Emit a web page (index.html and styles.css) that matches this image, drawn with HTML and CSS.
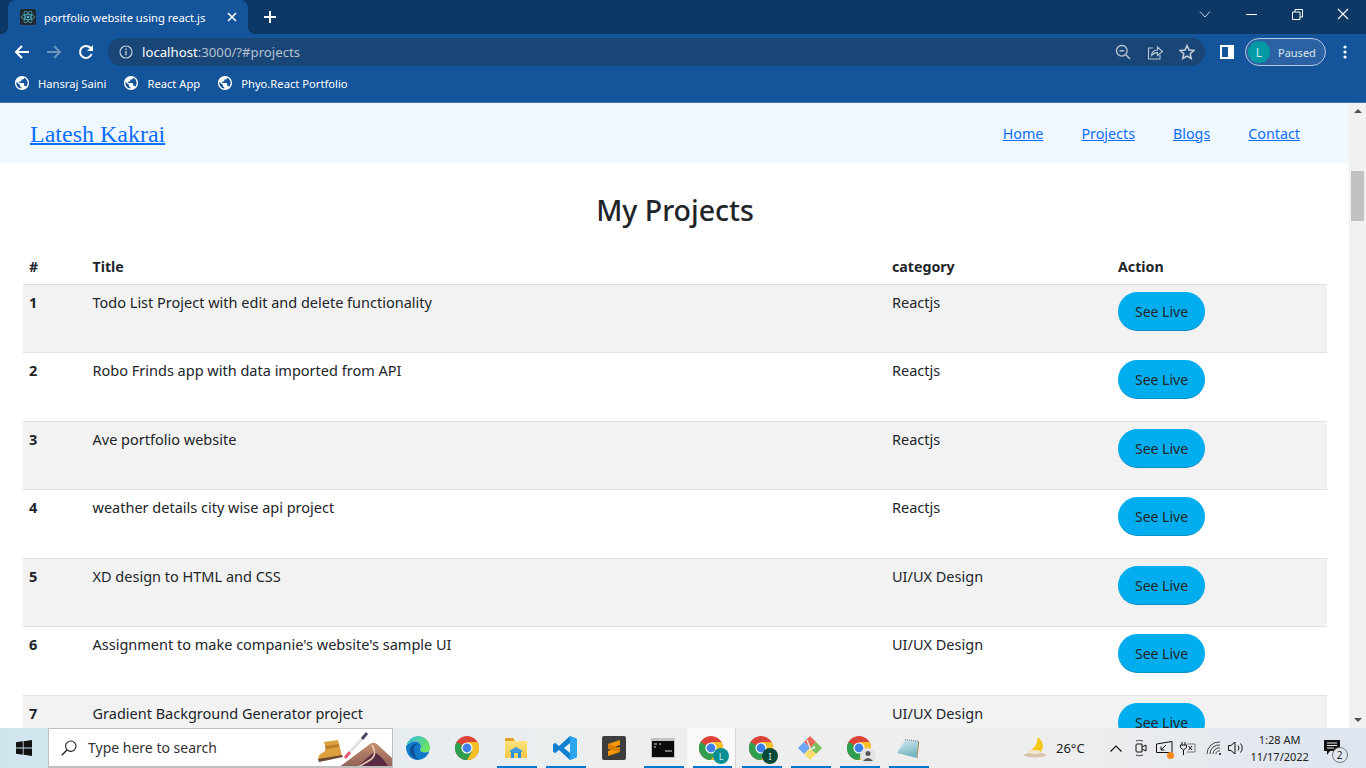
FILE: index.html
```html
<!DOCTYPE html>
<html lang="en">
  <head>
    <meta charset="UTF-8" />
    <meta name="viewport" content="width=device-width, initial-scale=1.0" />
    <title>portfolio website using react.js</title>
    <link rel="stylesheet" href="styles.css">
  </head>
  <body>
    <svg class="defs" width="0" height="0" aria-hidden="true">
      <defs>
        <linearGradient id="edge-top" x1="0" y1="0" x2="1" y2="0.6">
          <stop offset="0" stop-color="#2fb5e8" />
          <stop offset="1" stop-color="#6fe35f" />
        </linearGradient>
        <linearGradient id="folder-body" x1="0" y1="0" x2="0" y2="1">
          <stop offset="0" stop-color="#fde27c" />
          <stop offset="1" stop-color="#f6c647" />
        </linearGradient>
        <linearGradient id="notepad-page" x1="0" y1="0" x2="0.3" y2="1">
          <stop offset="0" stop-color="#d6ecef" />
          <stop offset="1" stop-color="#74b5c4" />
        </linearGradient>
        <linearGradient id="peak" x1="0" y1="0" x2="0" y2="1">
          <stop offset="0" stop-color="#c5906f" />
          <stop offset="1" stop-color="#8e5f57" />
        </linearGradient>
      </defs>
      <symbol id="globe" viewBox="2 2 20 20">
        <path d="M12 2C6.48 2 2 6.48 2 12s4.48 10 10 10 10-4.48 10-10S17.52 2 12 2zm-1 17.93c-3.95-.49-7-3.85-7-7.93 0-.62.08-1.21.21-1.79L9 15v1c0 1.1.9 2 2 2v1.93zm6.9-2.54c-.26-.81-1-1.39-1.9-1.39h-1v-3c0-.55-.45-1-1-1H8v-2h2c.55 0 1-.45 1-1V7h2c1.1 0 2-.9 2-2v-.41c2.93 1.19 5 4.06 5 7.41 0 2.08-.8 3.97-2.1 5.39z" fill="#fff" />
      </symbol>
      <symbol id="chrome" viewBox="0 0 24 24">
        <circle cx="12" cy="12" r="12" fill="#db4437" />
        <path d="M12 12 1.6 6A12 12 0 0 0 12 24l5.2-9z" fill="#2f9e4f" />
        <path d="M12 6h10.4A12 12 0 0 1 12 24l5.2-9z" fill="#f6c026" />
        <circle cx="12" cy="12" r="5.6" fill="#fff" />
        <circle cx="12" cy="12" r="4.4" fill="#3d7fe6" />
      </symbol>
    </svg>

    <header class="browser">
      <div class="tabstrip">
        <div class="tab">
          <svg class="favicon" width="16" height="16" viewBox="0 0 16 16">
            <rect width="16" height="16" rx="2" fill="#20262b" />
            <g fill="none" stroke="#4fb3c8" stroke-width=".8">
              <ellipse cx="8" cy="8" rx="6.5" ry="2.6" />
              <ellipse cx="8" cy="8" rx="6.5" ry="2.6" transform="rotate(60 8 8)" />
              <ellipse cx="8" cy="8" rx="6.5" ry="2.6" transform="rotate(120 8 8)" />
            </g>
            <circle cx="8" cy="8" r="1.3" fill="#4fb3c8" />
          </svg>
          <span class="tab-title">portfolio website using react.js</span>
          <svg class="tab-close" width="10" height="10" viewBox="0 0 10 10">
            <path d="M1 1l8 8M9 1 1 9" stroke="#fff" stroke-width="1.6" />
          </svg>
        </div>
        <svg class="new-tab" width="12" height="12" viewBox="0 0 12 12">
          <path d="M6 0v12M0 6h12" stroke="#fff" stroke-width="2" />
        </svg>
        <div class="window-controls">
          <span class="win-btn">
            <svg width="12" height="7" viewBox="0 0 12 7"><path d="M1 .5l5 5.5 5-5.5" fill="none" stroke="#c6d2df" /></svg>
          </span>
          <span class="win-btn">
            <svg width="11" height="1" viewBox="0 0 11 1"><path d="M0 .5h11" stroke="#fff" /></svg>
          </span>
          <span class="win-btn">
            <svg width="11" height="11" viewBox="0 0 11 11"><path d="M.5 3h7.5v7.5H.5zM3 3V.5h7.5V8H8" fill="none" stroke="#fff" /></svg>
          </span>
          <span class="win-btn">
            <svg width="12" height="12" viewBox="0 0 12 12"><path d="M1 1l10 10M11 1 1 11" stroke="#fff" stroke-width="1.1" /></svg>
          </span>
        </div>
      </div>

      <div class="toolbar">
        <svg class="tool-icon" width="16" height="16" viewBox="0 0 16 16">
          <path d="M15 8H2M8 2 2 8l6 6" fill="none" stroke="#fff" stroke-width="2" />
        </svg>
        <svg class="tool-icon" width="16" height="16" viewBox="0 0 16 16">
          <path d="M1 8h13M8 2l6 6-6 6" fill="none" stroke="#6f93bf" stroke-width="2" />
        </svg>
        <svg class="tool-icon" width="16" height="16" viewBox="0 0 16 16">
          <path d="M13.6 10.2A6 6 0 1 1 12.4 3.8L14 5.6" fill="none" stroke="#fff" stroke-width="2" />
          <path d="M15 1v6H9z" fill="#fff" />
        </svg>
        <div class="omnibox">
          <svg class="info-icon" width="14" height="14" viewBox="0 0 14 14">
            <circle cx="7" cy="7" r="6" fill="none" stroke="#c3cedb" stroke-width="1.2" />
            <path d="M7 6v4.2M7 3.6v1.4" stroke="#c3cedb" stroke-width="1.3" />
          </svg>
          <span class="url"><b>localhost</b>:3000/?#projects</span>
          <svg class="omni-icon" width="16" height="16" viewBox="0 0 16 16">
            <circle cx="6.8" cy="6.8" r="5.3" fill="none" stroke="#b9c5d3" stroke-width="1.4" />
            <path d="M10.8 10.8 15 15M4.5 6.8h4.6" stroke="#b9c5d3" stroke-width="1.4" />
          </svg>
          <svg class="omni-icon" width="16" height="16" viewBox="0 0 16 16">
            <path d="M6 4H1.500v11H13v-4" fill="none" stroke="#b9c5d3" stroke-width="1.100" />
            <path d="M4.500 11.500C5 7.500 8 6 10.500 6V3l5 4.500-5 4V8.600C8 8.600 6 9.500 4.500 11.500z" fill="none" stroke="#b9c5d3" stroke-width="1.100" />
          </svg>
          <svg class="omni-icon" width="16" height="16" viewBox="0 0 16 16">
            <path d="M8 1.500 10 6l4.800.5-3.600 3.200 1 4.800L8 12l-4.200 2.500 1-4.800L1.200 6.500 6 6z" fill="none" stroke="#c3cedb" stroke-width="1.500" />
          </svg>
        </div>
        <svg class="side-panel" width="14" height="14" viewBox="0 0 14 14">
          <path d="M0 0h14v14H0z" fill="#fff" />
          <path d="M2 2h6v10H2z" fill="#14549a" />
        </svg>
        <div class="profile">
          <span class="avatar">L</span>
          <span class="paused">Paused</span>
        </div>
        <svg class="menu-dots" width="4" height="14" viewBox="0 0 4 14">
          <circle cx="2" cy="2" r="1.600" fill="#fff" />
          <circle cx="2" cy="7" r="1.600" fill="#fff" />
          <circle cx="2" cy="12" r="1.600" fill="#fff" />
        </svg>
      </div>

      <div class="bookmarks">
        <a class="bookmark"><svg width="14" height="14"><use href="#globe" /></svg>Hansraj Saini</a>
        <a class="bookmark"><svg width="14" height="14"><use href="#globe" /></svg>React App</a>
        <a class="bookmark"><svg width="14" height="14"><use href="#globe" /></svg>Phyo.React Portfolio</a>
      </div>
    </header>

    <div class="viewport">
      <main class="page">
        <nav class="site-nav">
          <a href="#" class="brand">Latesh Kakrai</a>
          <ul class="nav-links">
            <li><a href="#">Home</a></li>
            <li><a href="#">Projects</a></li>
            <li><a href="#">Blogs</a></li>
            <li><a href="#">Contact</a></li>
          </ul>
        </nav>

        <section class="projects">
          <h1>My Projects</h1>
          <table>
            <colgroup>
              <col class="col-num" />
              <col class="col-title" />
              <col class="col-cat" />
              <col />
            </colgroup>
            <thead>
              <tr><th>#</th><th>Title</th><th>category</th><th>Action</th></tr>
            </thead>
            <tbody>
              <tr><th>1</th><td>Todo List Project with edit and delete functionality</td><td>Reactjs</td><td><button>See Live</button></td></tr>
              <tr><th>2</th><td>Robo Frinds app with data imported from API</td><td>Reactjs</td><td><button>See Live</button></td></tr>
              <tr><th>3</th><td>Ave portfolio website</td><td>Reactjs</td><td><button>See Live</button></td></tr>
              <tr><th>4</th><td>weather details city wise api project</td><td>Reactjs</td><td><button>See Live</button></td></tr>
              <tr><th>5</th><td>XD design to HTML and CSS</td><td>UI/UX Design</td><td><button>See Live</button></td></tr>
              <tr><th>6</th><td>Assignment to make companie's website's sample UI</td><td>UI/UX Design</td><td><button>See Live</button></td></tr>
              <tr><th>7</th><td>Gradient Background Generator project</td><td>UI/UX Design</td><td><button>See Live</button></td></tr>
            </tbody>
          </table>
        </section>
      </main>

      <div class="scrollbar">
        <span class="arrow-up"></span>
        <span class="scroll-track"><span class="scroll-thumb"></span></span>
        <span class="arrow-down"></span>
      </div>
    </div>

    <footer class="taskbar">
      <div class="start">
        <svg width="16" height="16" viewBox="0 0 16 16">
          <path d="M0 2.300 6.800 1.300v6.300H0zM7.600 1.200 16 0v7.600H7.600zM0 8.400h6.800v6.300L0 13.700zM7.600 8.400H16V16l-8.400-1.200z" fill="#111" />
        </svg>
      </div>
      <div class="search">
        <svg width="16" height="16" viewBox="0 0 16 16">
          <circle cx="9.800" cy="6.200" r="5.200" fill="none" stroke="#222" stroke-width="1.100" />
          <path d="M6 10 .8 15.200" stroke="#222" stroke-width="1.300" />
        </svg>
        <span class="search-text">Type here to search</span>
        <svg class="search-art" width="76" height="38" viewBox="0 0 76 38">
          <path d="M22 40 54 16q4-3 8 1l14 13v10z" fill="url(#peak)" />
          <path d="M40 40 58 24q8 4 14 14v2z" fill="#5a2c44" />
          <path d="M56 17q6 10-2 15t-14 8" fill="none" stroke="#e9cdb2" stroke-width="1.500" />
          <path d="M8 14l14-2 4 16-24 4q0-6 6-8 3-3 0-10z" fill="#dca03e" />
          <path d="M9 18l14-2v3l-13 2z" fill="#b97f2c" />
          <path d="M2 31l24-4 1 2-24 5z" fill="#6e4a34" />
          <path d="M29 30l5-6" stroke="#e0566f" stroke-width="3" />
          <path d="M34 24l12-13" stroke="#e4e0e4" stroke-width="3" />
          <path d="M46 11l5-6" stroke="#4b4560" stroke-width="3" />
        </svg>
      </div>

      <div class="task-icons">
        <span class="task">
          <svg width="24" height="24" viewBox="0 0 24 24">
            <path d="M12 0a12 12 0 0 1 12 12c0 3-2.500 4.500-5 4.500-3 0-5-1-5-3 0-1 1-1.500 1-3 0-3-3-5-6-5C5 5.500 1 8 0 11 1 5 6 0 12 0z" fill="url(#edge-top)" />
            <path d="M0 11c1-3 5-5.500 9-5.500 3 0 6 2 6 5 0 1.500-1 2-1 3 0 2 2 3 5 3 2 0 3.500-1 4.500-2A12 12 0 0 1 12 24C5 24 0 18 0 11z" fill="#0f78c9" />
            <path d="M8 13c0-3 2-5 5-5-6-1-9 3-9 7 0 4 4 8 9 8.500C10 22 8 18 8 13z" fill="#0a4f96" />
          </svg>
        </span>
        <span class="task">
          <svg width="24" height="24"><use href="#chrome" /></svg>
        </span>
        <span class="task open">
          <svg width="22" height="20" viewBox="0 0 22 20">
            <path d="M0 1q0-1 1-1h7l2 3H0z" fill="#e0a126" />
            <path d="M0 3h22v16q0 1-1 1H1q-1 0-1-1z" fill="url(#folder-body)" />
            <path d="M11 9l6 3.500V14H5v-1.500z" fill="#3f9be0" />
            <path d="M6 14h10v6H6z" fill="#2a8fd8" />
            <path d="M9 15h4v5H9z" fill="#fbd35e" />
          </svg>
        </span>
        <span class="task open">
          <svg width="24" height="24" viewBox="0 0 24 24">
            <path d="M17 0 24 3v18l-7 3-11-10-4 3.200L0 15.500V8.500l2-1.700 4 3.200zM17 7l-6 5 6 5z" fill="#0f7fd0" />
            <path d="M17 0 24 3v18l-7 3z" fill="#2aa6ee" />
          </svg>
        </span>
        <span class="task">
          <svg width="24" height="24" viewBox="0 0 24 24">
            <rect width="24" height="24" rx="2" fill="#3d3d3d" />
            <path d="M18 4 6 8v5l12-4zM18 11 6 15v5l12-4z" fill="#ff9800" />
            <path d="M6 8l12 4v4L6 13z" fill="#d97f00" />
          </svg>
        </span>
        <span class="task open">
          <svg width="24" height="20" viewBox="0 0 24 20">
            <rect width="24" height="20" fill="#c3c3c3" />
            <path d="M1 3h22v16H1z" fill="#0a0a0a" />
            <path d="M3 6h3M8 6h2M3 9h2M14 13h7" stroke="#ddd" />
          </svg>
        </span>
        <span class="task open active">
          <svg width="24" height="24"><use href="#chrome" /></svg>
          <span class="task-badge teal">L</span>
        </span>
        <span class="task open">
          <svg width="24" height="24"><use href="#chrome" /></svg>
          <span class="task-badge dark">I</span>
        </span>
        <span class="task open">
          <svg width="24" height="24" viewBox="0 0 24 24">
            <path d="M12 0l6 6-6 6-6-6z" fill="#e7675a" />
            <path d="M6 6l6 6-6 6-6-6z" fill="#6ca6f5" />
            <path d="M18 6l6 6-6 6-6-6z" fill="#77c05c" />
            <path d="M12 12l6 6-6 6-6-6z" fill="#f7dc6f" />
            <path d="M9 4l3.500 9M12 14l5-3" stroke="#f1f1f1" stroke-width="1.200" fill="none" />
            <circle cx="16" cy="11.500" r="1.300" fill="#f1f1f1" />
          </svg>
        </span>
        <span class="task open">
          <svg width="24" height="24"><use href="#chrome" /></svg>
          <span class="task-badge person">
            <svg width="12" height="12" viewBox="0 0 12 12">
              <circle cx="6" cy="3.500" r="2.500" fill="#555" />
              <path d="M1 11q5-6 10 0z" fill="#555" />
            </svg>
          </span>
        </span>
        <span class="task open">
          <svg width="24" height="24" viewBox="0 0 24 24">
            <path d="M1 17l3 2 16 3 2-17z" fill="#efefef" />
            <path d="M9 3.700 22 5l-1.300 17L1 17z" fill="url(#notepad-page)" />
            <path d="M22 5l1.200 1-1.700 16.500-.8-.5z" fill="#9c8a62" />
            <path d="M9 3.700 22 5" stroke="#8f9aa0" stroke-width="1.400" stroke-dasharray="1 1" />
          </svg>
        </span>
      </div>

      <div class="tray">
        <svg class="weather" width="24" height="24" viewBox="0 0 24 24">
          <path d="M14 1q8 7 3 15H4Q13 12 14 1z" fill="#f4c816" />
          <ellipse cx="11" cy="19" rx="11" ry="2.500" fill="#d8c4a8" />
          <ellipse cx="11" cy="16" rx="6" ry="2" fill="#f3e6cf" />
        </svg>
        <span class="temp">26°C</span>
        <svg class="tray-chevron" width="12" height="7" viewBox="0 0 12 7">
          <path d="M.5 6.500 6 1l5.500 5.500" fill="none" stroke="#111" stroke-width="1.100" />
        </svg>
        <svg class="tray-meet" width="12" height="18" viewBox="0 0 12 18">
          <path d="M7 5H2a1 1 0 0 0-1 1v6a1 1 0 0 0 1 1h5zM7 8l4-2v6l-4-2" fill="none" stroke="#111" />
          <path d="M1 2q3-1.500 7 0M1 16q3 1.500 7 0" fill="none" stroke="#444" />
        </svg>
        <span class="tray-slot">
          <svg width="17" height="15" viewBox="0 0 17 15">
            <path d="M.5 3 16 .5v11H.5zM5 9l5-5M5 5.500V9h3.500" fill="none" stroke="#111" />
          </svg>
          <span class="orange-dot"></span>
        </span>
        <svg class="tray-power" width="16" height="14" viewBox="0 0 16 14">
          <path d="M2 1v3M5 1v3M.5 4h6v2.500L3.500 9 .5 6.500zM3.500 9v5" fill="none" stroke="#111" />
          <path d="M7 3h8v8H7" fill="none" stroke="#777" />
          <path d="M8.500 5l3.500 4M12 5 8.500 9" stroke="#111" />
        </svg>
        <svg class="tray-wifi" width="16" height="14" viewBox="0 0 16 14">
          <path d="M1 13A12 12 0 0 1 14 1M4 13a9 9 0 0 1 10-9M7 13a6 6 0 0 1 7-6M10 13a3 3 0 0 1 4-3" fill="none" stroke="#444" />
          <circle cx="14" cy="13" r="1" fill="#111" />
        </svg>
        <svg class="tray-volume" width="16" height="14" viewBox="0 0 16 14">
          <path d="M.5 4.500H3L7 1v12L3 9.500H.5zM10 4.500q2 2.500 0 5M12.500 2.500q3.500 4.500 0 9" fill="none" stroke="#111" />
        </svg>
        <div class="clock">
          <span>1:28 AM</span>
          <span>11/17/2022</span>
        </div>
        <span class="notify">
          <svg width="16" height="15" viewBox="0 0 16 15">
            <path d="M0 0h16v11H6l-3 4v-4H0z" fill="#111" />
            <path d="M3 3h10M3 5.500h10M3 8h7" stroke="#eee" />
          </svg>
          <span class="notify-count">2</span>
        </span>
      </div>
    </footer>
  </body>
</html>
```

FILE: styles.css
```css
/* General styling */
body {
  font-family: "Noto Sans", Arial, sans-serif;
  margin: 0;
  padding: 0;
  height: 100vh;
  display: flex;
  flex-direction: column;
  overflow: hidden;
  color: #212529;
  background: #fff;
}

.defs {
  position: absolute;
}

/* Browser frame */
.browser {
  flex: none;
  background: #14549a;
  color: #fff;
  border-bottom: 1px solid #3f75ad;
}

.tabstrip {
  height: 34px;
  background: #0d3764;
  display: flex;
  align-items: center;
  padding-left: 8px;
}

.tab {
  position: relative;
  align-self: stretch;
  width: 240px;
  box-sizing: border-box;
  background: #14549a;
  border-radius: 8px 8px 0 0;
  display: flex;
  align-items: center;
  padding: 0 11px 0 12px;
}

.tab::before,
.tab::after {
  content: "";
  position: absolute;
  bottom: 0;
  width: 8px;
  height: 8px;
  background: radial-gradient(circle at 0 0, #0d3764 8px, #14549a 8.5px);
}

.tab::before {
  left: -8px;
}

.tab::after {
  right: -8px;
  background: radial-gradient(circle at 100% 0, #0d3764 8px, #14549a 8.5px);
}

.tab-title {
  font-size: 11.2px;
  margin-left: 8px;
  flex: 1;
  white-space: nowrap;
}

.new-tab {
  margin-left: 16px;
}

.window-controls {
  margin-left: auto;
  display: flex;
}

.win-btn {
  width: 46px;
  height: 28px;
  display: flex;
  align-items: center;
  justify-content: center;
  margin-bottom: 6px;
}

.toolbar {
  height: 36px;
  box-sizing: border-box;
  padding-left: 14px;
  display: flex;
  align-items: center;
}

.tool-icon {
  margin-right: 16px;
}

.omnibox {
  width: 1097px;
  height: 28px;
  margin-left: -2px;
  border-radius: 14px;
  background: #1a4677;
  display: flex;
  align-items: center;
  box-sizing: border-box;
  padding: 0 10px 0 11px;
  gap: 16px;
}

.info-icon {
  flex: none;
  margin-right: -7px;
}

.url {
  flex: 1;
  font-size: 13.2px;
  color: #b3c1d1;
}

.url b {
  font-weight: 400;
  color: #fff;
}

.side-panel {
  margin-left: 15px;
}

.profile {
  margin-left: 11px;
  width: 81px;
  height: 28px;
  box-sizing: border-box;
  border: 1px solid #b5c9df;
  border-radius: 14px;
  background: #2a62a3;
  display: flex;
  align-items: center;
  padding-left: 2px;
  font-size: 11px;
}

.avatar {
  width: 22px;
  height: 22px;
  border-radius: 50%;
  background: #009aa5;
  display: flex;
  align-items: center;
  justify-content: center;
  font-size: 12px;
  color: #cdeef0;
}

.paused {
  margin-left: 8px;
  color: #dde6f0;
}

.menu-dots {
  margin-left: 17px;
}

.bookmarks {
  height: 32px;
  box-sizing: border-box;
  padding: 0 0 6px 15px;
  display: flex;
  align-items: center;
  gap: 18px;
}

.bookmark {
  display: flex;
  align-items: center;
  gap: 9px;
  font-size: 11.2px;
  white-space: nowrap;
}

/* Page */
.viewport {
  flex: 1;
  min-height: 0;
  display: flex;
  overflow: hidden;
}

.page {
  flex: 1;
  min-width: 0;
}

.site-nav {
  height: 60px;
  background: #f0f8ff;
  display: flex;
  align-items: center;
  justify-content: space-between;
  padding: 0 49px 0 30px;
}

.brand {
  font-family: "Liberation Serif", "Times New Roman", serif;
  font-size: 24px;
  color: #0d6efd;
  margin-top: 2px;
  text-decoration-thickness: 2px;
}

.nav-links {
  list-style: none;
  margin: 0;
  padding: 0;
  display: flex;
  gap: 38px;
  font-size: 14.3px;
}

.nav-links a {
  color: #0d6efd;
}

.projects {
  padding: 0 22px 0 23px;
}

.projects h1 {
  margin: 0;
  padding: 26px 0 17.5px;
  text-align: center;
  font-size: 28.5px;
  line-height: 42px;
  font-weight: 500;
}

table {
  width: 100%;
  table-layout: fixed;
  border-collapse: collapse;
  font-size: 14.5px;
  line-height: 24px;
}

.col-num {
  width: 63.5px;
}

.col-title {
  width: 799.5px;
}

.col-cat {
  width: 226px;
}

th,
td {
  padding: 5px 6px 6px;
  text-align: left;
  vertical-align: top;
  border-bottom: 1px solid #dee2e6;
}

thead th {
  padding: 6px 6px 5px;
  font-size: 14.2px;
}

tbody tr {
  height: 68.5px;
}

tbody tr:nth-child(odd) {
  background: #f2f2f2;
}

button {
  background: #00aeef;
  color: #212529;
  font: inherit;
  font-size: 14px;
  width: 87px;
  height: 39px;
  padding: 2px 0 0;
  margin-top: 2px;
  border: none;
  border-bottom: 1px solid #0a8fc4;
  border-radius: 20px;
  cursor: pointer;
}

/* Scrollbar */
.scrollbar {
  flex: none;
  width: 17px;
  background: #f1f1f1;
  display: flex;
  flex-direction: column;
  align-items: center;
}

.arrow-up,
.arrow-down {
  flex: none;
  width: 0;
  height: 0;
  border-left: 4px solid transparent;
  border-right: 4px solid transparent;
  margin: 6px 0;
}

.arrow-up {
  border-bottom: 4px solid #505050;
}

.arrow-down {
  border-top: 4px solid #505050;
}

.scroll-track {
  flex: 1;
  align-self: stretch;
  padding: 52px 2px 0;
}

.scroll-thumb {
  display: block;
  height: 50px;
  background: #c1c1c1;
}

/* Taskbar */
.taskbar {
  flex: none;
  height: 40px;
  display: flex;
  align-items: stretch;
  background: linear-gradient(90deg, #cfe5ee 0, #e6edf0 380px, #eeeeee 700px, #eeeeee 1050px, #dde5f0 100%);
}

.start {
  width: 48px;
  display: flex;
  align-items: center;
  justify-content: center;
}

.search {
  width: 345px;
  box-sizing: border-box;
  background: #fff;
  border: 1px solid #bfbfbf;
  border-bottom-width: 2px;
  display: flex;
  align-items: center;
  padding-left: 12px;
  overflow: hidden;
}

.search-text {
  font-size: 14px;
  margin-left: 11px;
  color: #333;
}

.search-art {
  margin-left: auto;
  align-self: flex-end;
}

.task-icons {
  display: flex;
}

.task {
  position: relative;
  width: 49px;
  display: flex;
  align-items: center;
  justify-content: center;
}

.task.open::after {
  content: "";
  position: absolute;
  left: 6px;
  right: 3px;
  bottom: 0;
  height: 2px;
  background: #0078d4;
}

.task.active {
  background: #f9f9f9;
  border-right: 1px solid #d5d5d5;
  box-sizing: border-box;
}

.task-badge {
  position: absolute;
  left: 26px;
  top: 20px;
  width: 16px;
  height: 16px;
  border-radius: 50%;
  font-size: 9px;
  display: flex;
  align-items: center;
  justify-content: center;
  color: #d5f0ee;
}

.task-badge.teal {
  background: #0a8f94;
}

.task-badge.dark {
  background: #0a4a3a;
}

.task-badge.person {
  background: #e4e4e4;
}

.tray {
  flex: 1;
  display: flex;
  align-items: center;
  color: #222;
}

.weather {
  margin-left: 92px;
}

.temp {
  margin-left: 8px;
  font-size: 13px;
}

.tray-chevron {
  margin-left: 25px;
}

.tray-meet {
  margin-left: 13px;
}

.tray-slot {
  position: relative;
  margin-left: 9px;
  display: flex;
}

.tray-power {
  margin-left: 7px;
}

.tray-wifi {
  margin-left: 10px;
}

.tray-volume {
  margin-left: 6px;
}

.orange-dot {
  position: absolute;
  right: -1px;
  bottom: -3px;
  width: 7px;
  height: 7px;
  border-radius: 50%;
  background: #f58a1f;
}

.clock {
  margin-left: 1px;
  width: 70px;
  display: flex;
  flex-direction: column;
  align-items: center;
  font-size: 11px;
  line-height: 17px;
}

.notify {
  position: relative;
  margin-left: 9px;
  display: flex;
  align-self: flex-start;
  margin-top: 12px;
}

.notify-count {
  position: absolute;
  left: 8px;
  top: 7px;
  width: 14px;
  height: 14px;
  border: 1px solid #777;
  border-radius: 50%;
  background: #e2e6ee;
  font-size: 10px;
  text-align: center;
  line-height: 14px;
}
```
